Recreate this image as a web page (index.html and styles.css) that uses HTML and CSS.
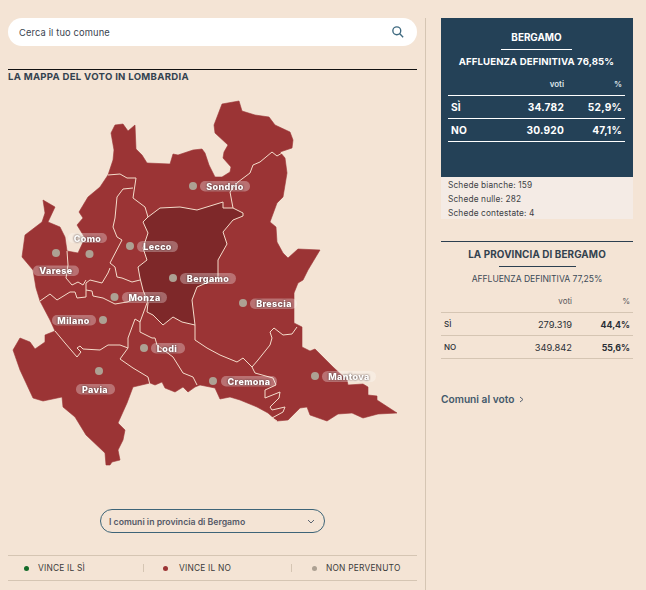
FILE: index.html
```html
<!DOCTYPE html>
<html lang="it">
<head>
<meta charset="utf-8">
<title>La mappa del voto in Lombardia</title>
<link rel="stylesheet" href="styles.css">
</head>
<body>
<div class="page">
  <main class="left">
    <div class="search">
      <span class="search-text">Cerca il tuo comune</span>
      <svg class="search-icon" width="12" height="12" viewBox="0 0 14 14"><circle cx="5.6" cy="5.6" r="4.6"/><path d="M8.8 8.8 L13 13"/></svg>
    </div>
    <h2 class="map-title">LA MAPPA DEL VOTO IN LOMBARDIA</h2>
    <svg class="map" width="409" height="427" viewBox="8 83 409 427">
      <path class="region" d="M108 175 L113 160 L114 150 L111 133 L115 125 L123 124 L128 131 L135 125 L136 149 L142 155 L147 163 L170 164 L173 154 L178 155 L193 150 L202 149 L205 153 L209 165 L215 177 L222 177 L230 172 L231 167 L223 158 L224 152 L228 145 L215 133 L214 125 L222 104 L239 101 L242 111 L255 115 L269 117 L275 125 L290 132 L293 140 L292 148 L280 152 L285 158 L287 173 L283 197 L277 203 L270 222 L276 227 L277 242 L283 253 L288 258 L298 249 L320 250 L308 270 L303 280 L298 283 L294 293 L294 323 L302 327 L302 338 L302 347 L310 351 L315 349 L333 367 L347 380 L348 385 L363 384 L368 387 L368 395 L377 396 L377 400 L397 413 L378 414 L363 418 L352 413 L338 414 L327 421 L310 415 L307 407 L300 408 L288 420 L277 421 L268 413 L257 407 L240 400 L230 397 L220 399 L215 388 L200 385 L195 387 L188 392 L183 387 L175 392 L165 388 L162 382 L155 385 L150 383 L133 387 L127 403 L118 423 L125 430 L123 440 L118 450 L120 460 L112 462 L110 465 L106 465 L105 453 L86 435 L75 417 L63 407 L62 397 L43 401 L33 398 L20 370 L13 350 L20 338 L30 342 L35 349 L45 342 L45 335 L55 331 L50 320 L40 301 L36 288 L33 270 L22 257 L25 235 L42 222 L45 213 L43 200 L55 207 L48 222 L60 227 L65 237 L67 251 L78 253 L85 238 L77 225 L83 218 L79 212 L88 197 L100 187 Z"/>
      <path class="bergamo" d="M148 217 L160 208 L180 207 L197 210 L223 202 L223 208 L233 208 L243 213 L243 216 L233 220 L223 232 L227 244 L218 260 L218 278 L197 287 L192 300 L195 325 L182 322 L173 317 L163 325 L153 315 L147 312 L148 303 L143 290 L140 278 L138 267 L147 260 L143 248 L148 233 L143 222 Z"/>
      <g class="borders">
        <path d="M108 175 L120 174 L127 178 L136 178 L133 198 L145 207 L148 217 L160 208 L180 207 L197 210 L223 202 L223 208 L233 208 L243 213 L243 216 L233 220 L223 232 L227 244 L218 260 L218 278 L197 287 L192 300 L195 325 L182 322 L173 317 L163 325 L153 315 L147 312 L148 303 L143 290 L140 278 L138 267 L147 260 L143 248 L148 233 L143 222 L148 217"/>
        <path d="M233 208 L230 192 L238 182 L250 173 L253 165 L260 162 L272 152 L277 156 L282 153"/>
        <path d="M133 188 L123 189 L117 197 L115 218 L113 227 L117 237 L122 240 L110 263 L115 267 L117 277 L122 278 L132 282 L140 280"/>
        <path d="M110 268 L108 273 L102 283 L90 280 L86 283 L86 290"/>
        <path d="M67 251 L68 265 L66 278 L72 285 L78 282 L83 285 L86 280"/>
        <path d="M40 301 L50 294 L57 300 L70 292 L75 292 L77 298 L86 297 L86 290 L92 291 L93 296 L103 298 L115 304 L127 302 L142 297"/>
        <path d="M147 303 L140 322 L135 319 L128 338 L128 348 L120 345 L108 345 L100 350 L83 349 L80 346 L77 348 L81 352 L77 357 L65 343 L55 331"/>
        <path d="M128 348 L120 359 L133 368 L148 377 L150 385"/>
        <path d="M140 322 L140 332 L152 338 L155 338 L157 345 L173 357 L183 373 L193 377 L197 385"/>
        <path d="M195 325 L195 340 L207 348 L220 355 L237 362 L243 358 L252 367 L258 360 L270 345 L272 338 L270 332 L274 328 L283 335 L292 334 L297 327"/>
        <path d="M252 367 L255 373 L273 378 L276 385 L265 390 L265 398 L280 392 L279 398 L270 407 L272 410 L285 407 L283 412 L272 418 L277 421"/>
      </g>
      <g class="dots">
        <circle cx="193" cy="186" r="4"/><circle cx="89.5" cy="254" r="4"/><circle cx="56" cy="253" r="4"/><circle cx="130" cy="246" r="4"/><circle cx="173" cy="278" r="4"/><circle cx="114.5" cy="297" r="4"/><circle cx="103" cy="320" r="4"/><circle cx="144" cy="348" r="4"/><circle cx="99" cy="371" r="4"/><circle cx="243" cy="303" r="4"/><circle cx="213" cy="381" r="4"/><circle cx="315" cy="376" r="4"/>
      </g>
      <g class="pills">
        <rect x="200" y="181" width="50" height="10.5" rx="5"/><rect x="68" y="233" width="39" height="10" rx="5"/><rect x="33" y="265.500" width="46" height="10.5" rx="5"/><rect x="137" y="241" width="41" height="11" rx="5.500"/><rect x="180" y="273" width="56" height="11" rx="5.500"/><rect x="122" y="292" width="45" height="11" rx="5.500"/><rect x="52" y="315" width="44" height="10.5" rx="5"/><rect x="151" y="343" width="34" height="10.5" rx="5"/><rect x="76" y="384" width="39" height="10.5" rx="5"/><rect x="250" y="298.500" width="47" height="10.5" rx="5"/><rect x="221" y="376" width="56" height="10.5" rx="5"/><rect x="322" y="371" width="54" height="11" rx="5.500"/>
      </g>
      <g class="labels">
        <text x="225" y="189.500">Sondrio</text><text x="87.500" y="241.500">Como</text><text x="56" y="274">Varese</text><text x="157.500" y="250">Lecco</text><text x="208" y="282">Bergamo</text><text x="144.500" y="301">Monza</text><text x="73.500" y="323.500">Milano</text><text x="167" y="351.500">Lodi</text><text x="95" y="392.500">Pavia</text><text x="274" y="307">Brescia</text><text x="249" y="385">Cremona</text><text x="349" y="380">Mantova</text>
      </g>
    </svg>
    <div class="select">
      <span>I comuni in provincia di Bergamo</span>
      <svg class="chev" width="8" height="5" viewBox="0 0 8 5"><path d="M1 1 L4 4 L7 1"/></svg>
    </div>
    <div class="legend">
      <div class="legend-item first"><i class="dot green"></i>VINCE IL SÌ</div>
      <div class="legend-item second"><i class="dot red"></i>VINCE IL NO</div>
      <div class="legend-item third"><i class="dot grey"></i>NON PERVENUTO</div>
    </div>
  </main>
  <aside class="right">
    <section class="card">
      <h3 class="card-title">BERGAMO</h3>
      <div class="card-rule"></div>
      <p class="card-turnout">AFFLUENZA DEFINITIVA 76,85%</p>
      <div class="row head"><span></span><span>voti</span><span>%</span></div>
      <div class="row big"><span>SÌ</span><span>34.782</span><span>52,9%</span></div>
      <div class="row big"><span>NO</span><span>30.920</span><span>47,1%</span></div>
    </section>
    <div class="notes">
      <p>Schede bianche: 159</p>
      <p>Schede nulle: 282</p>
      <p>Schede contestate: 4</p>
    </div>
    <section class="prov">
      <h3 class="prov-title">LA PROVINCIA DI BERGAMO</h3>
      <div class="prov-rule"></div>
      <p class="prov-turnout">AFFLUENZA DEFINITIVA 77,25%</p>
      <div class="prow phead"><span></span><span>voti</span><span>%</span></div>
      <div class="prow"><span class="pname">SÌ</span><span>279.319</span><b>44,4%</b></div>
      <div class="prow"><span class="pname">NO</span><span>349.842</span><b>55,6%</b></div>
    </section>
    <a class="more">Comuni al voto <svg class="more-chev" width="5" height="7" viewBox="0 0 5 7"><path d="M1 1 L4 3.500 L1 6"/></svg></a>
  </aside>
</div>
</body>
</html>
```
FILE: styles.css
```css
* { box-sizing: border-box; }
html, body { margin: 0; height: 590px; overflow: hidden; }
body { background: #f4e4d5; font-family: Inter, "Liberation Sans", sans-serif; color: #2e3e4c; }
p, h2, h3 { margin: 0; }
.page { display: flex; height: 590px; padding-top: 18px; padding-left: 8px; }

.left { width: 409px; display: flex; flex-direction: column; }
.search { height: 28px; background: #fff; border-radius: 14px; display: flex; align-items: center; justify-content: space-between; padding: 0 13px 0 11px; }
.search-text { font-size: 9.3px; color: #3a4450; letter-spacing: .15px; }
.search-icon circle, .search-icon path { fill: none; stroke: #3f6a80; stroke-width: 1.6; }
.map-title { margin-top: 23px; height: 14px; border-top: 1px solid #111; font-size: 9.6px; line-height: 13px; font-weight: 700; color: #33424f; letter-spacing: .28px; }
.map { display: block; flex: none; }
.region { fill: #9b3435; stroke: #9b3435; stroke-width: .6; stroke-linejoin: round; }
.bergamo { fill: #7e2829; }
.borders path { fill: none; stroke: #f4dccb; stroke-width: 1; stroke-linejoin: round; }
.dots circle { fill: #ada193; }
.pills rect { fill: #fff; fill-opacity: .3; }
.labels text { font-size: 9px; font-weight: 800; fill: #fff; text-anchor: middle; letter-spacing: .35px; filter: drop-shadow(0 0 1px rgba(50,30,30,.85)); }

.select { width: 225px; height: 24px; margin: -1px 0 0 92px; border: 1px solid #3d6478; border-radius: 12px; display: flex; align-items: center; justify-content: space-between; padding: 1px 9px 0 8px; font-size: 8.7px; font-weight: 600; color: #565a68; }
.chev path, .more-chev path { fill: none; stroke: #5a6472; stroke-width: 1; }
.legend { margin-top: 22px; height: 26px; border-top: 1px solid #d5c5b3; border-bottom: 1px solid #d5c5b3; display: flex; align-items: center; font-size: 8.4px; color: #3a3a3a; letter-spacing: .2px; }
.legend-item { display: flex; align-items: center; height: 8px; }
.first { width: 136px; padding-left: 16px; border-right: 1px solid #d5c5b3; }
.second { width: 148px; padding-left: 19px; border-right: 1px solid #d5c5b3; }
.third { padding-left: 20px; }
.dot { width: 5px; height: 5px; border-radius: 50%; margin-right: 9px; flex: none; }
.second .dot { margin-right: 11px; }
.third .dot { margin-right: 9px; }
.green { background: #146b2a; }
.red { background: #9b3435; }
.grey { background: #ada193; }

.right { margin-left: 8px; width: 221px; padding: 0 13px 0 15px; border-left: 1px solid #d5c5b3; }
.card { height: 159px; background: #244157; color: #fff; padding: 14px 8px 0 7px; }
.card-title { font-size: 9.9px; line-height: 11px; font-weight: 700; text-align: center; }
.card-rule { width: 71px; height: 1px; background: #fff; margin: 6px auto 0; }
.card-turnout { margin-top: 6px; font-size: 9.6px; line-height: 11px; font-weight: 700; text-align: center; white-space: nowrap; letter-spacing: .12px; }
.row { display: grid; grid-template-columns: 1fr 60px 58px; align-items: center; height: 23px; border-bottom: 1px solid #fff; font-weight: 700; padding-right: 3px; }
.row span:nth-child(n+2) { text-align: right; }
.row.head { margin-top: 6px; font-size: 8px; font-weight: 600; color: #dfe5ea; height: 23px; }
.row.big { font-size: 10.2px; padding-left: 3px; letter-spacing: .2px; }
.notes { height: 42px; background: #f4ebe5; padding: 1px 7px 0; font-size: 8.3px; line-height: 14px; color: #3c3f44; letter-spacing: .15px; }
.prov { margin-top: 22px; border-top: 1px solid #2c3f50; padding-top: 7px; }
.prov-title { font-size: 9.9px; line-height: 11px; font-weight: 700; text-align: center; color: #33424f; letter-spacing: .1px; }
.prov-rule { width: 77px; height: 1px; background: #2c3f50; margin: 6px auto 0; }
.prov-turnout { margin-top: 7px; font-size: 8.6px; line-height: 10px; text-align: center; color: #3c4a57; letter-spacing: -.05px; }
.prow { display: grid; grid-template-columns: 1fr 70px 58px; align-items: center; height: 23px; border-bottom: 1px solid #d5c5b3; font-size: 9.3px; color: #2a2f36; padding: 0 3px; }
.prow span:nth-child(n+2), .prow b { text-align: right; }
.prow b { font-weight: 700; font-size: 8.8px; }
.pname { font-size: 8px; font-weight: 500; }
.phead { margin-top: 6px; font-size: 8px; color: #55565a; }
.more { display: block; margin-top: 34px; font-size: 10.2px; line-height: 12px; font-weight: 600; color: #43596b; }
.more-chev { margin-left: 2px; }
```
